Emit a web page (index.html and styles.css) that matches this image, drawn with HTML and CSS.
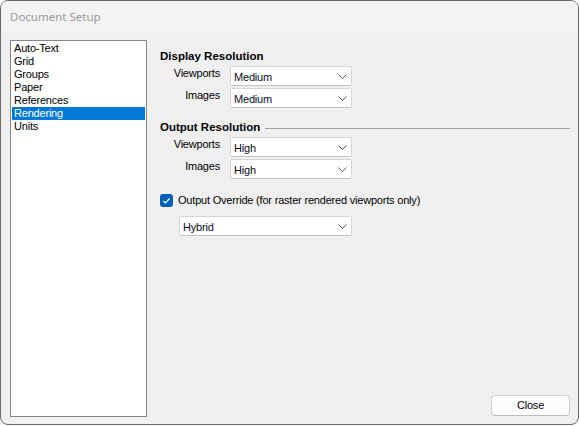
FILE: index.html
```html
<!DOCTYPE html>
<html>
<head>
<meta charset="utf-8">
<link rel="stylesheet" href="styles.css">
</head>
<body>
<div class="window">
  <div class="titlebar">Document Setup</div>
  <div class="content">
    <div class="listbox">
      <div class="item">Auto-Text</div>
      <div class="item">Grid</div>
      <div class="item">Groups</div>
      <div class="item">Paper</div>
      <div class="item">References</div>
      <div class="item selected">Rendering</div>
      <div class="item">Units</div>
    </div>
    <div class="panel">
      <div class="heading">Display Resolution</div>
      <div class="row first">
        <div class="label">Viewports</div>
        <div class="combo"><span>Medium</span><svg class="chev" width="9" height="5" viewBox="0 0 9 5"><path d="M0.5 0.5 L4.5 4.5 L8.5 0.5" fill="none" stroke="#5a5a5a" stroke-width="1"/></svg></div>
      </div>
      <div class="row">
        <div class="label">Images</div>
        <div class="combo"><span>Medium</span><svg class="chev" width="9" height="5" viewBox="0 0 9 5"><path d="M0.5 0.5 L4.5 4.5 L8.5 0.5" fill="none" stroke="#5a5a5a" stroke-width="1"/></svg></div>
      </div>
      <div class="heading group">Output Resolution<span class="rule"></span></div>
      <div class="row first">
        <div class="label">Viewports</div>
        <div class="combo"><span>High</span><svg class="chev" width="9" height="5" viewBox="0 0 9 5"><path d="M0.5 0.5 L4.5 4.5 L8.5 0.5" fill="none" stroke="#5a5a5a" stroke-width="1"/></svg></div>
      </div>
      <div class="row">
        <div class="label">Images</div>
        <div class="combo"><span>High</span><svg class="chev" width="9" height="5" viewBox="0 0 9 5"><path d="M0.5 0.5 L4.5 4.5 L8.5 0.5" fill="none" stroke="#5a5a5a" stroke-width="1"/></svg></div>
      </div>
      <div class="check-row">
        <div class="checkbox"><svg width="13" height="13" viewBox="0 0 13 13"><path d="M3.3 6.8 L5.4 8.9 L9.8 4.3" fill="none" stroke="#ffffff" stroke-width="1.2"/></svg></div>
        <div class="check-label">Output Override (for raster rendered viewports only)</div>
      </div>
      <div class="combo wide"><span>Hybrid</span><svg class="chev" width="9" height="5" viewBox="0 0 9 5"><path d="M0.5 0.5 L4.5 4.5 L8.5 0.5" fill="none" stroke="#5a5a5a" stroke-width="1"/></svg></div>
      <div class="footer">
        <div class="button">Close</div>
      </div>
    </div>
  </div>
</div>
</body>
</html>
```
FILE: styles.css
```css
html, body {
  margin: 0;
  padding: 0;
  background: #ffffff;
}
.window {
  box-sizing: border-box;
  width: 579px;
  height: 425px;
  border: 1px solid #6a6a6a;
  border-radius: 8px;
  background: #f0f0f0;
  overflow: hidden;
  display: flex;
  flex-direction: column;
  font-family: "Liberation Sans", Arial, sans-serif;
  font-size: 11px;
  letter-spacing: -0.2px;
  color: #000;
}
.titlebar {
  height: 31px;
  flex: none;
  background: #f3f3f3;
  color: #9a9a9a;
  font-family: "Noto Sans", "Open Sans", sans-serif;
  font-size: 11.5px;
  letter-spacing: 0;
  line-height: 32px;
  padding-left: 9px;
}
.content {
  display: flex;
  flex: none;
  margin-top: 8px;
  padding-left: 9px;
  padding-right: 8px;
  height: 377px;
}
.listbox {
  box-sizing: border-box;
  width: 137px;
  height: 377px;
  background: #ffffff;
  border: 1px solid #828790;
  padding: 1px 1px;
}
.item {
  height: 13px;
  line-height: 13px;
  padding-left: 2px;
  white-space: nowrap;
}
.item.selected {
  background: #0078d7;
  color: #ffffff;
}
.panel {
  flex: 1;
  margin-left: 13px;
  display: flex;
  flex-direction: column;
  padding-top: 10px;
}
.heading {
  font-weight: bold;
  font-size: 11.5px;
  letter-spacing: 0;
  height: 13px;
  line-height: 13px;
  display: flex;
  align-items: center;
  white-space: nowrap;
}
.heading.group {
  margin-top: 13px;
}
.rule {
  flex: 1;
  border-top: 1px solid #a0a0a0;
  margin-left: 5px;
  margin-top: 1px;
}
.row {
  display: flex;
  align-items: flex-start;
  margin-top: 2px;
}
.row.first {
  margin-top: 3px;
}
.label {
  width: 60px;
  text-align: right;
  line-height: 13px;
  padding-top: 1px;
  margin-right: 10px;
}
.combo {
  box-sizing: border-box;
  width: 122px;
  height: 20px;
  background: #ffffff;
  border: 1px solid #d6d6d6;
  border-bottom-color: #c4c4c4;
  border-radius: 2px;
  display: flex;
  align-items: center;
  justify-content: space-between;
  padding-left: 3px;
  padding-right: 4px;
  padding-top: 1px;
  color: #0a0a1e;
}
.chev {
  display: block;
}
.combo.wide {
  width: 173px;
  margin-left: 19px;
  margin-top: 9px;
}
.check-row {
  display: flex;
  align-items: center;
  margin-top: 14px;
  height: 14px;
}
.checkbox {
  box-sizing: border-box;
  width: 13px;
  height: 13px;
  background: #005fb8;
  border-radius: 3px;
  margin-right: 5px;
}
.checkbox svg {
  display: block;
}
.check-label {
  line-height: 13px;
  white-space: nowrap;
}
.footer {
  margin-top: auto;
  display: flex;
  justify-content: flex-end;
  margin-bottom: 1px;
}
.button {
  box-sizing: border-box;
  width: 79px;
  height: 21px;
  background: #fdfdfd;
  border: 1px solid #d0d0d0;
  border-bottom-color: #bcbcbc;
  border-radius: 4px;
  text-align: center;
  line-height: 19px;
}
```
